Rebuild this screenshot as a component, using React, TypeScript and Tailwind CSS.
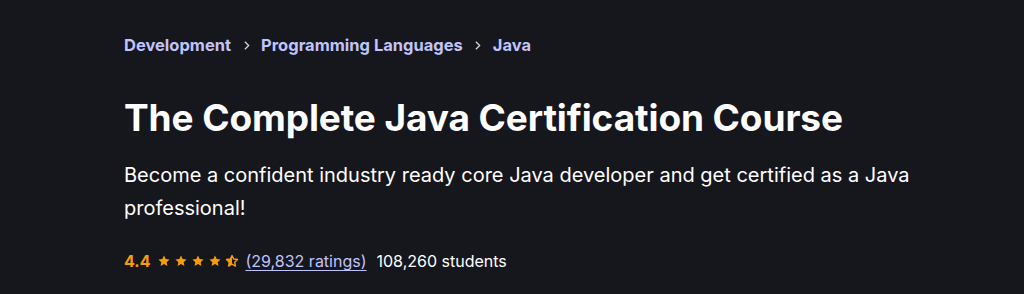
import React from "react";

const crumbs = ["Development", "Programming Languages", "Java"];

const STAR = "M12 2.5l2.9 6.1 6.6.8-4.9 4.6 1.3 6.6L12 17.3l-5.9 3.3 1.3-6.6-4.9-4.6 6.6-.8z";

const Star: React.FC<{ half?: boolean }> = ({ half }) => (
  <svg viewBox="0 0 24 24" className="w-[14px] h-[14px]">
    {half ? (
      <>
        <defs>
          <clipPath id="half-left">
            <rect x="0" y="0" width="12" height="24" />
          </clipPath>
        </defs>
        <path d={STAR} fill="none" stroke="#f69c08" strokeWidth="2.4" strokeLinejoin="round" />
        <path d={STAR} fill="#f69c08" clipPath="url(#half-left)" />
      </>
    ) : (
      <path d={STAR} fill="#f69c08" />
    )}
  </svg>
);

const Chevron = () => (
  <svg viewBox="0 0 24 24" className="w-[13px] h-[13px] mx-[8.5px]">
    <path d="M9 5l7 7-7 7" fill="none" stroke="#d1d2e0" strokeWidth="2.4" />
  </svg>
);

export default function App() {
  return (
    <div className="w-[1024px] h-[294px] bg-[#16161d] overflow-hidden font-['Inter',sans-serif]">
      <div className="pl-[124px] pt-[33px]">
        {/* breadcrumb */}
        <div className="flex items-center text-[16.5px] font-bold text-[#c0c4fc] leading-[24px]">
          {crumbs.map((c, i) => (
            <React.Fragment key={c}>
              <span>{c}</span>
              {i < crumbs.length - 1 && <Chevron />}
            </React.Fragment>
          ))}
        </div>

        <h1 className="mt-[39px] text-[37px] font-bold text-white leading-[44px] tracking-[-0.1px]">
          The Complete Java Certification Course
        </h1>

        <p className="mt-[19px] w-[820px] text-[20px] text-white leading-[33px]">
          Become a confident industry ready core Java developer and get certified as a Java
          professional!
        </p>

        <div className="mt-[24px] flex items-center text-[16px] leading-[24px]">
          <span className="font-bold text-[#f69c08] mr-[6.5px]">4.4</span>
          <div className="flex gap-[3px] mr-[6.5px]">
            <Star />
            <Star />
            <Star />
            <Star />
            <Star half />
          </div>
          <span className="text-[#c0c4fc] underline underline-offset-[3px]">(29,832 ratings)</span>
          <span className="text-white ml-[10px]">108,260 students</span>
        </div>
      </div>
    </div>
  );
}
